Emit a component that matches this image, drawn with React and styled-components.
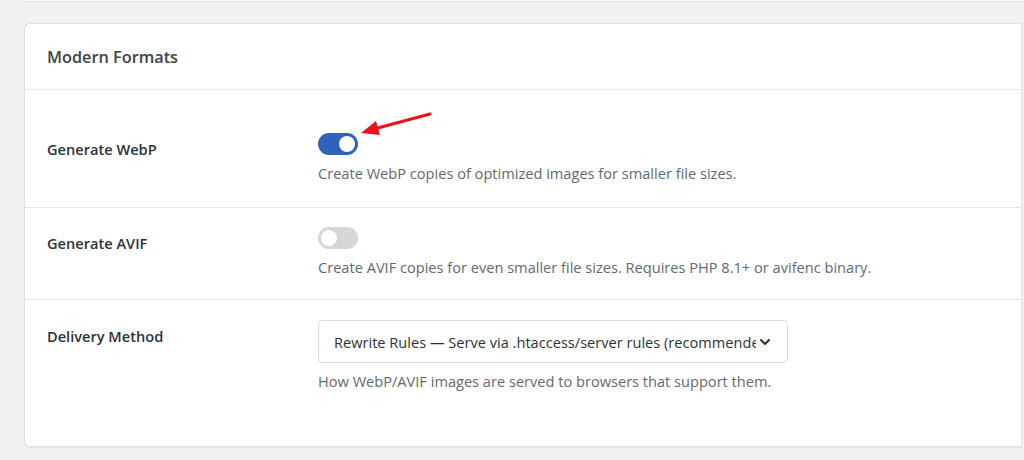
import React from "react";
import styled, { createGlobalStyle } from "styled-components";

const Global = createGlobalStyle`
  html, body { margin: 0; padding: 0; background: #f0f1f3; }
  body { font-family: "Open Sans", "Noto Sans", sans-serif; -webkit-font-smoothing: antialiased; }
  * { box-sizing: border-box; }
`;

const Page = styled.div`
  width: 1024px;
  height: 460px;
  overflow: hidden;
  padding: 0 2px 0 24px;
`;

const PrevCardEdge = styled.div`
  height: 2px;
  margin-left: 2px;
  background: #fafafa;
  border-bottom: 1px solid #e2e3e5;
  margin-bottom: 21px;
`;

const Card = styled.section`
  background: #fff;
  border: 1px solid #dfe0e2;
  border-radius: 6px 0 0 6px;
  border-right: 1px solid #e6e6e8;
  box-shadow: 0 1px 1px rgba(0, 0, 0, 0.04);
  height: 424px;
  display: flex;
  flex-direction: column;
`;

const CardHeader = styled.header`
  height: 66px;
  display: flex;
  align-items: center;
  padding: 0 22px;
  border-bottom: 1px solid #e4e5e7;
  font-size: 16.3px;
  font-weight: 600;
  color: #3c434a;
`;

const Body = styled.div`
  padding: 24px 0;
  display: flex;
  flex-direction: column;
`;

const Row = styled.div`
  display: grid;
  grid-template-columns: 271px 1fr;
  padding: ${(p) => p.$pad || "19px 22px 24px"};
  border-bottom: ${(p) => (p.$last ? "none" : "1px solid #e4e5e7")};
`;

const Label = styled.div`
  padding-top: 6px;
  font-size: 14.6px;
  line-height: 20px;
  font-weight: 600;
  color: #2c3338;
`;

const Control = styled.div`
  display: flex;
  flex-direction: column;
  align-items: flex-start;
  gap: 8px;
  position: relative;
`;

const Toggle = styled.span`
  display: inline-block;
  position: relative;
  width: 40px;
  height: 22px;
  border-radius: 11px;
  background: ${(p) => (p.$on ? "#2f63b9" : "#d6d6d8")};
  &::after {
    content: "";
    position: absolute;
    top: 3px;
    left: ${(p) => (p.$on ? "21px" : "3px")};
    width: 16px;
    height: 16px;
    border-radius: 50%;
    background: #fff;
  }
`;

const Desc = styled.p`
  margin: 0;
  font-size: 14.6px;
  line-height: 20px;
  color: #646970;
`;

const Select = styled.div`
  width: 470px;
  height: 43px;
  border: 1px solid #dcdcde;
  border-radius: 4px;
  display: flex;
  align-items: center;
  padding: 0 16px 0 15px;
  gap: 3px;
  font-size: 14.6px;
  color: #2c3338;
`;

const SelectText = styled.span`
  flex: 1;
  min-width: 0;
  white-space: nowrap;
  overflow: hidden;
  text-overflow: clip;
`;

const Arrow = styled.svg`
  position: absolute;
  left: 40px;
  top: -20px;
  overflow: visible;
`;

export default function App() {
  return (
    <>
      <Global />
      <Page>
        <PrevCardEdge />
        <Card>
          <CardHeader>Modern Formats</CardHeader>
          <Body>
            <Row>
              <Label>Generate WebP</Label>
              <Control>
                <Toggle $on />
                <Arrow width="80" height="30" viewBox="0 0 80 30">
                  <line x1="72" y1="1" x2="16" y2="16" stroke="#e8131b" strokeWidth="3" strokeLinecap="round" />
                  <polygon points="3,20 18,8 22,22" fill="#e8131b" />
                </Arrow>
                <Desc>Create WebP copies of optimized images for smaller file sizes.</Desc>
              </Control>
            </Row>
            <Row $pad="19px 22px 22px">
              <Label>Generate AVIF</Label>
              <Control>
                <Toggle />
                <Desc>Create AVIF copies for even smaller file sizes. Requires PHP 8.1+ or avifenc binary.</Desc>
              </Control>
            </Row>
            <Row $last $pad="20px 22px 20px">
              <Label>Delivery Method</Label>
              <Control>
                <Select>
                  <SelectText>Rewrite Rules — Serve via .htaccess/server rules (recommended)</SelectText>
                  <svg width="12" height="12" viewBox="0 0 12 12">
                    <path d="M2 4 L6 8 L10 4" fill="none" stroke="#2c3338" strokeWidth="2" strokeLinecap="round" strokeLinejoin="round" />
                  </svg>
                </Select>
                <Desc>How WebP/AVIF images are served to browsers that support them.</Desc>
              </Control>
            </Row>
          </Body>
        </Card>
      </Page>
    </>
  );
}
